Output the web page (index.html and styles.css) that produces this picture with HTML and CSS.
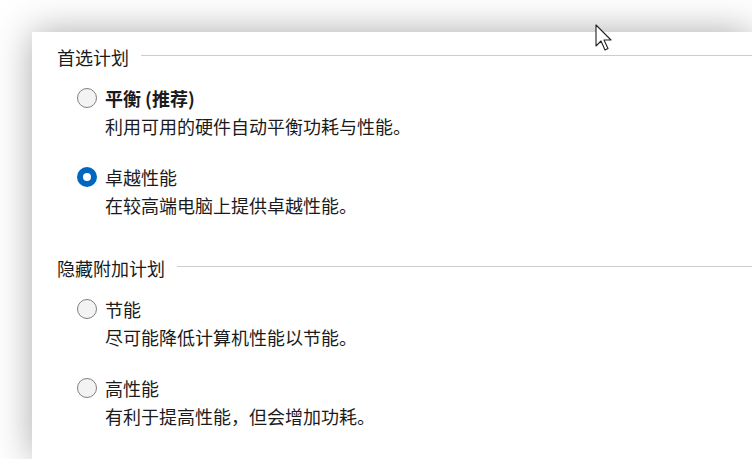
FILE: index.html
```html
<!DOCTYPE html>
<html lang="zh-CN">
<head>
  <meta charset="UTF-8">
  <title>电源计划</title>
  <link rel="stylesheet" href="styles.css">
</head>
<body>
  <div class="panel">
    <!-- 首选计划 -->
    <div class="group-title"><span>首选计划</span><i class="rule"></i></div>
    <div class="plans">
      <label class="plan">
        <span class="radio"></span>
        <span class="name bold">平衡 (推荐)</span>
        <span class="desc">利用可用的硬件自动平衡功耗与性能。</span>
      </label>
      <label class="plan">
        <span class="radio checked"></span>
        <span class="name">卓越性能</span>
        <span class="desc">在较高端电脑上提供卓越性能。</span>
      </label>
    </div>

    <!-- 隐藏附加计划 -->
    <div class="group-title second"><span>隐藏附加计划</span><i class="rule"></i></div>
    <div class="plans">
      <label class="plan">
        <span class="radio"></span>
        <span class="name">节能</span>
        <span class="desc">尽可能降低计算机性能以节能。</span>
      </label>
      <label class="plan">
        <span class="radio"></span>
        <span class="name">高性能</span>
        <span class="desc">有利于提高性能，但会增加功耗。</span>
      </label>
    </div>
  </div>

  <!-- 鼠标指针 -->
  <svg class="cursor" width="20" height="30" viewBox="0 0 20 30">
    <path d="M1 1 L1 22 L6 17 L10 26 L13 24.5 L9 16 L16 16 Z" fill="#fff" stroke="#222" stroke-width="1.1" stroke-linejoin="round"/>
  </svg>
</body>
</html>
```

FILE: styles.css
```css
* { box-sizing: border-box; }
html, body {
  margin: 0;
  height: 100%;
}
body {
  background: #fff;
  overflow: hidden;
  padding: 32px 0 0 32px;
  font-family: "Noto Sans CJK SC", "Noto Sans", sans-serif;
  font-size: 18px;
  color: #1b1b1b;
}
.panel {
  width: 720px;
  height: 427px;
  background: #fff;
  box-shadow: 0 0 36px rgba(0, 0, 0, 0.34);
  padding: 11px 0 0 25px;
}
/* 分组标题 */
.group-title {
  display: flex;
  align-items: center;
  height: 28px;
  line-height: 28px;
}
.group-title.second {
  margin-top: 35px;
}
.group-title .rule {
  flex: 1;
  height: 1px;
  background: #cdcdcd;
  margin: -3px 0 0 12px;
}
/* 选项 */
.plans {
  margin-top: 13px;
  padding-left: 21px;
}
.plan {
  display: grid;
  grid-template-columns: 27px 1fr;
  line-height: 28px;
  margin-bottom: 23px;
}
.plan:last-child { margin-bottom: 0; }
.plan .radio {
  grid-row: 1;
  align-self: center;
  width: 20px;
  height: 20px;
  margin-left: -1px;
  border-radius: 50%;
  border: 1.5px solid #7f7f7f;
  background: #f3f3f3;
}
.plan .radio.checked {
  border: 6px solid #0067c0;
  background: #fff;
}
.plan .name { grid-column: 2; grid-row: 1; }
.plan .bold { font-weight: bold; }
.plan .desc { grid-column: 2; }
/* 鼠标 */
.cursor {
  position: absolute;
  left: 595px;
  top: 24px;
}
```
